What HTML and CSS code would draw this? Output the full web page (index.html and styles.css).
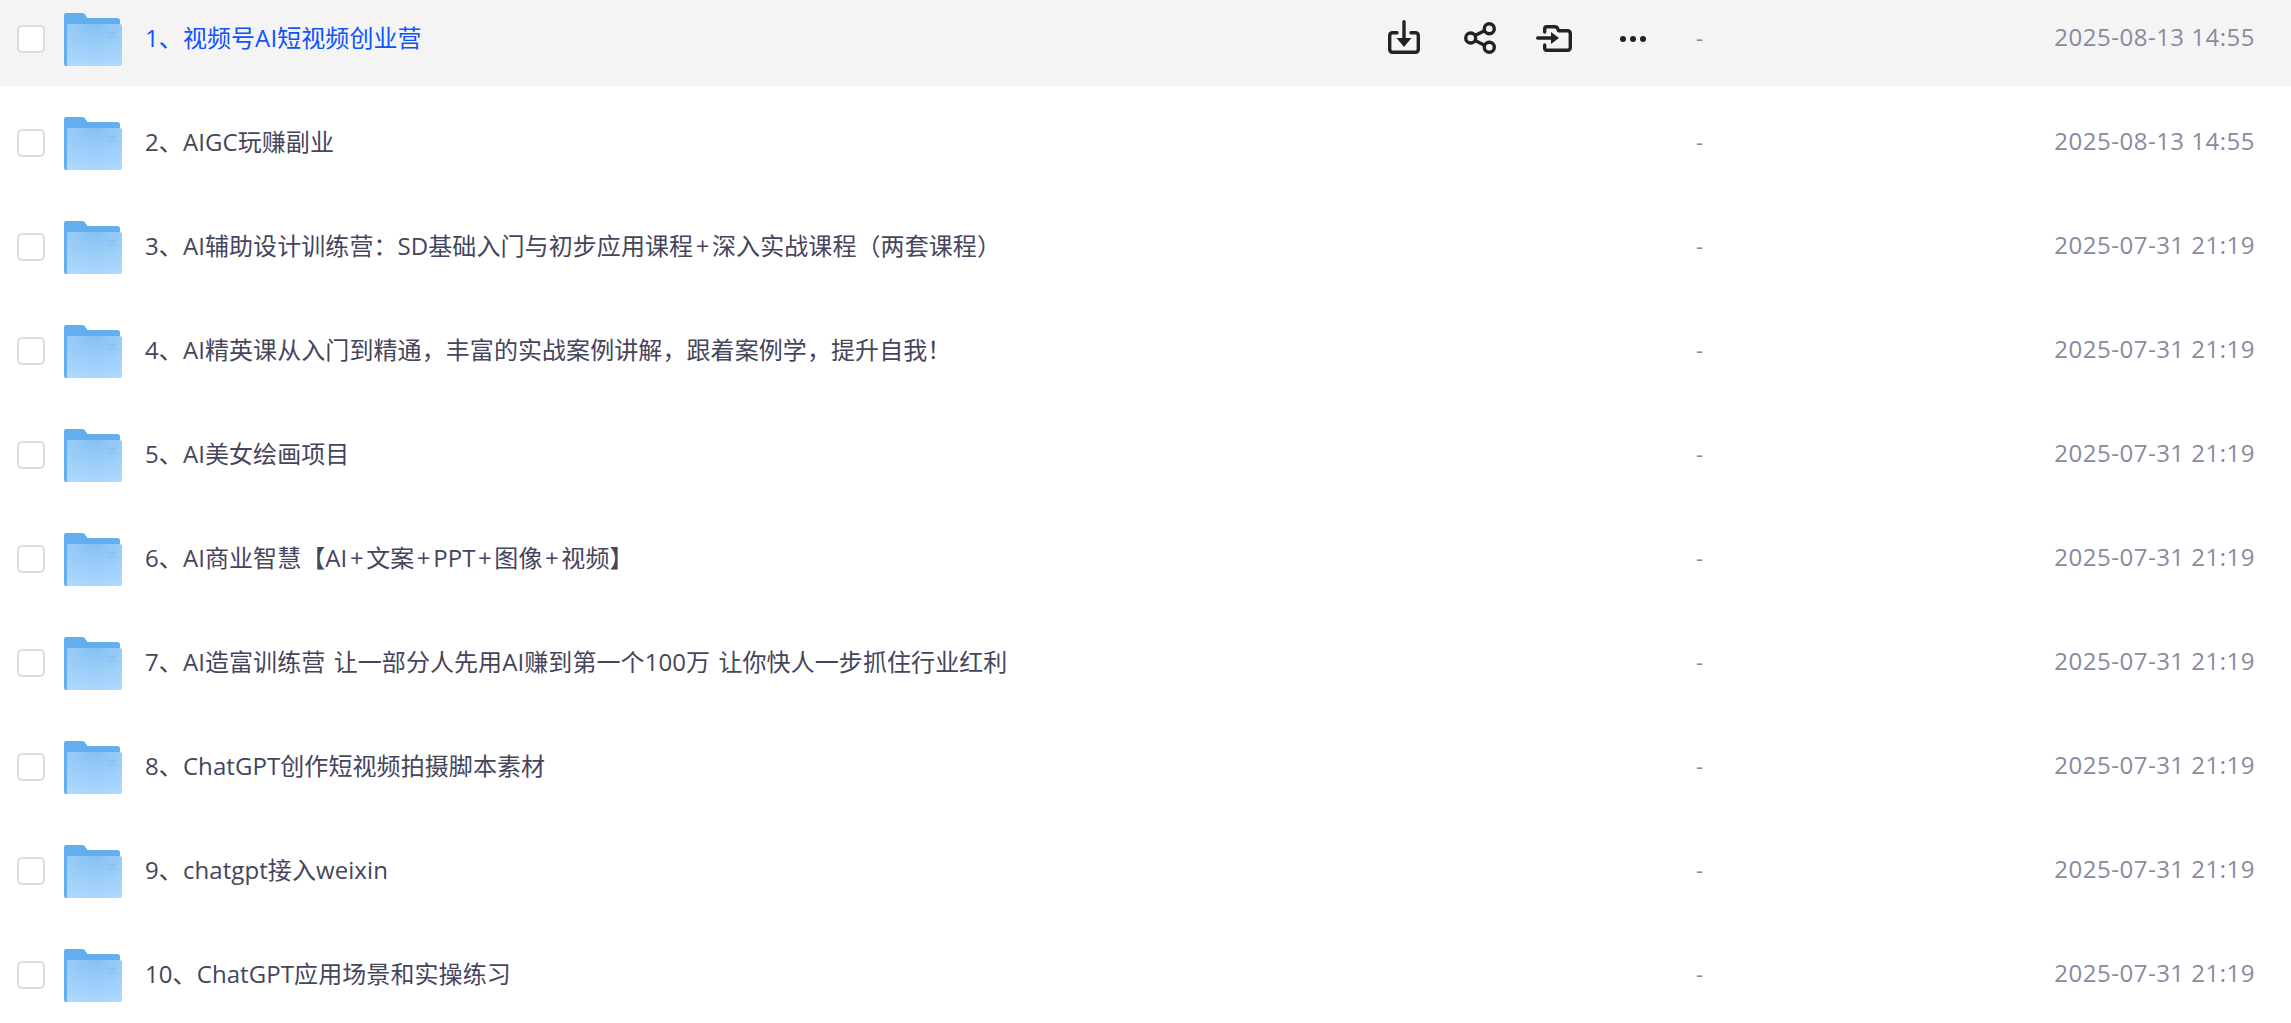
FILE: index.html
```html
<!DOCTYPE html>
<html lang="en">
<head>
    <meta charset="UTF-8">
    <title>File list</title>
    <link rel="stylesheet" href="styles.css">
</head>
<body>
    <svg class="defs" width="0" height="0">
        <symbol id="folder" viewBox="0 0 58 53">
            <defs>
                <radialGradient id="folderFront" cx="0.5" cy="0" r="1.1">
                    <stop offset="0" stop-color="#86c1f5"/>
                    <stop offset="1" stop-color="#b1d9fc"/>
                </radialGradient>
            </defs>
            <path d="M2 0H18C20 0 21 1 22 3L23.500 5H53C55 5 56 6 56 8V20H0V2C0 1 1 0 2 0Z" fill="#62aeee"/>
            <path d="M0 4H3V53H2C1 53 0 52 0 51Z" fill="#62aeee"/>
            <path d="M3 11H56C57 11 58 12 58 13V51C58 52 57 53 56 53H3Z" fill="url(#folderFront)"/>
            <path d="M44 20H52M44 23.500H52" stroke="#7fbcf1" stroke-width="1"/>
        </symbol>
    </svg>

    <div class="file-list">
        <div class="file-row active">
            <span class="check"></span>
            <svg class="folder"><use href="#folder"/></svg>
            <div class="name">
                <span class="title">1、视频号AI短视频创业营</span>
                <div class="actions">
                    <svg viewBox="0 0 38 40" class="act">
                        <path d="M13 13.700H8.700C6.700 13.700 5.700 14.700 5.700 16.700V30.300C5.700 32.300 6.700 33.300 8.700 33.300H31.300C33.300 33.300 34.300 32.300 34.300 30.300V16.700C34.300 14.700 33.300 13.700 31.300 13.700H27" fill="none" stroke="#222" stroke-width="3.400" stroke-linecap="round"/>
                        <path d="M20 2.700V20" stroke="#222" stroke-width="3.400" stroke-linecap="round"/>
                        <path d="M12.500 19H27.500L20 28Z" fill="#222"/>
                    </svg>
                    <svg viewBox="0 0 38 40" class="act">
                        <circle cx="10.700" cy="19" r="5" fill="none" stroke="#222" stroke-width="3.400"/>
                        <circle cx="29.300" cy="9.700" r="5" fill="none" stroke="#222" stroke-width="3.400"/>
                        <circle cx="29.300" cy="28.300" r="5" fill="none" stroke="#222" stroke-width="3.400"/>
                        <path d="M15 16.500L25 11.500M15 21.500L25 26.500" stroke="#222" stroke-width="3.400"/>
                    </svg>
                    <svg viewBox="0 0 38 40" class="act">
                        <path d="M8.700 13V9.700C8.700 8.300 9.500 7.700 10.700 7.700H19C20 7.700 21 8.300 21.500 9.200L22.500 11.700H31.300C33.300 11.700 34.300 12.700 34.300 14.700V28.300C34.300 30.300 33.300 31.300 31.300 31.300H10.700C9.500 31.300 8.700 30.500 8.700 29.300V26" fill="none" stroke="#222" stroke-width="3.400" stroke-linecap="round" stroke-linejoin="round"/>
                        <path d="M1.700 19H16" stroke="#222" stroke-width="3.400" stroke-linecap="round"/>
                        <path d="M15 13L23 19L15 25Z" fill="#222"/>
                    </svg>
                    <svg viewBox="0 0 38 40" class="act">
                        <circle cx="11" cy="20" r="3" fill="#222"/>
                        <circle cx="21" cy="20" r="3" fill="#222"/>
                        <circle cx="31" cy="20" r="3" fill="#222"/>
                    </svg>
                </div>
            </div>
            <span class="size">-</span>
            <span class="date">2025-08-13 14:55</span>
        </div>
        <div class="file-row">
            <span class="check"></span>
            <svg class="folder"><use href="#folder"/></svg>
            <div class="name"><span class="title">2、AIGC玩赚副业</span></div>
            <span class="size">-</span>
            <span class="date">2025-08-13 14:55</span>
        </div>
        <div class="file-row">
            <span class="check"></span>
            <svg class="folder"><use href="#folder"/></svg>
            <div class="name"><span class="title">3、AI辅助设计训练营：SD基础入门与初步应用课程<span class="plus">+</span>深入实战课程（两套课程）</span></div>
            <span class="size">-</span>
            <span class="date">2025-07-31 21:19</span>
        </div>
        <div class="file-row">
            <span class="check"></span>
            <svg class="folder"><use href="#folder"/></svg>
            <div class="name"><span class="title">4、AI精英课从入门到精通，丰富的实战案例讲解，跟着案例学，提升自我！</span></div>
            <span class="size">-</span>
            <span class="date">2025-07-31 21:19</span>
        </div>
        <div class="file-row">
            <span class="check"></span>
            <svg class="folder"><use href="#folder"/></svg>
            <div class="name"><span class="title">5、AI美女绘画项目</span></div>
            <span class="size">-</span>
            <span class="date">2025-07-31 21:19</span>
        </div>
        <div class="file-row">
            <span class="check"></span>
            <svg class="folder"><use href="#folder"/></svg>
            <div class="name"><span class="title">6、AI商业智慧【AI<span class="plus">+</span>文案<span class="plus">+</span>PPT<span class="plus">+</span>图像<span class="plus">+</span>视频】</span></div>
            <span class="size">-</span>
            <span class="date">2025-07-31 21:19</span>
        </div>
        <div class="file-row">
            <span class="check"></span>
            <svg class="folder"><use href="#folder"/></svg>
            <div class="name"><span class="title wide">7、AI造富训练营 让一部分人先用AI赚到第一个100万 让你快人一步抓住行业红利</span></div>
            <span class="size">-</span>
            <span class="date">2025-07-31 21:19</span>
        </div>
        <div class="file-row">
            <span class="check"></span>
            <svg class="folder"><use href="#folder"/></svg>
            <div class="name"><span class="title">8、ChatGPT创作短视频拍摄脚本素材</span></div>
            <span class="size">-</span>
            <span class="date">2025-07-31 21:19</span>
        </div>
        <div class="file-row">
            <span class="check"></span>
            <svg class="folder"><use href="#folder"/></svg>
            <div class="name"><span class="title">9、chatgpt接入weixin</span></div>
            <span class="size">-</span>
            <span class="date">2025-07-31 21:19</span>
        </div>
        <div class="file-row">
            <span class="check"></span>
            <svg class="folder"><use href="#folder"/></svg>
            <div class="name"><span class="title">10、ChatGPT应用场景和实操练习</span></div>
            <span class="size">-</span>
            <span class="date">2025-07-31 21:19</span>
        </div>
    </div>
</body>
</html>
```

FILE: styles.css
```css
html, body {
    height: 100%;
    overflow: hidden;
}
body {
    margin: 0;
    background-color: #fff;
    font-family: "Open Sans", "Noto Sans CJK SC", sans-serif;
    font-size: 24px;
    color: #45455c;
}
.defs {
    display: block;
    height: 0;
}
.file-list {
    margin-top: -18px;
}
.file-row {
    display: flex;
    align-items: center;
    box-sizing: border-box;
    height: 104px;
    padding-top: 10px;
    padding-left: 17px;
    padding-right: 36px;
}
.file-row.active {
    background-color: #f4f4f4;
}
.file-row.active .title {
    color: #0d53ff;
}
.check {
    width: 28px;
    height: 28px;
    box-sizing: border-box;
    border: 2px solid #dcdcdc;
    border-radius: 5px;
    background-color: #fff;
    flex-shrink: 0;
}
.folder {
    width: 58px;
    height: 53px;
    margin-left: 19px;
    flex-shrink: 0;
}
.name {
    display: flex;
    align-items: center;
    justify-content: space-between;
    width: 1551px;
    margin-left: 23px;
}
.title {
    padding-bottom: 5px;
    letter-spacing: 0.080px;
    white-space: nowrap;
}
.title.wide {
    word-spacing: 2px;
}
.plus {
    padding: 0 2.500px;
}
.actions {
    display: flex;
    align-items: center;
    gap: 38px;
    margin-right: 46px;
}
.act {
    width: 38px;
    height: 40px;
}
.size {
    padding-bottom: 5px;
    color: #8a8a9e;
    font-size: 22px;
}
.date {
    margin-left: auto;
    padding-bottom: 5px;
    color: #8a8a9e;
    letter-spacing: 0.500px;
    white-space: nowrap;
}
```
